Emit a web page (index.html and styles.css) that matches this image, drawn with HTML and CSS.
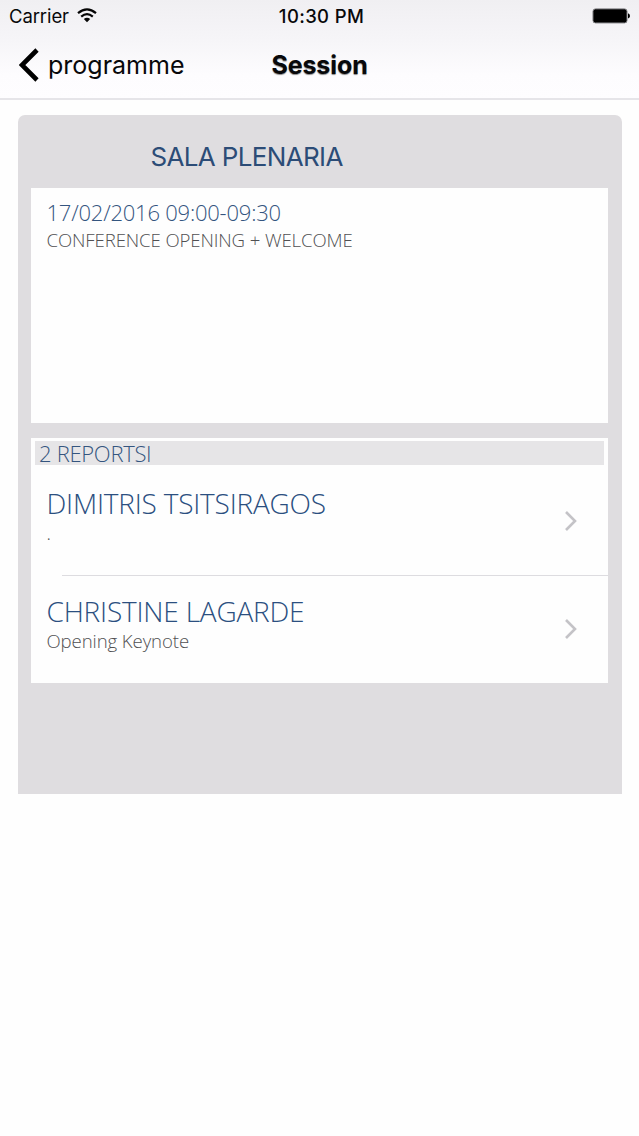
FILE: index.html
```
<!DOCTYPE html>
<html lang="en">
<head>
<meta charset="utf-8">
<title>Session</title>
<link rel="stylesheet" href="styles.css">
</head>
<body>
<header class="header">
  <div class="status">
    <div class="status-left"><span class="carrier">Carrier</span>
      <svg class="wifi" width="20" height="15" viewBox="0 0 20 15" fill="none" stroke="#050505" stroke-width="2.2"><path d="M1 5.2Q10-2.4 19 5.2M4.2 8.6Q10 3.6 15.8 8.6"/><path d="M6.8 11.1Q10 8.3 13.2 11.1L10 14.2Z" fill="#050505" stroke="none"/></svg>
    </div>
    <span class="clock">10:30 PM</span>
    <svg class="battery" width="38" height="16" viewBox="0 0 38 16"><rect x="1" y=".9" width="34" height="14" rx="2.5" fill="#000" stroke="#77777a"/><path d="M36 5.3Q38 6 38 7.9T36 10.5Z" fill="#000"/></svg>
  </div>
  <nav class="nav">
    <a class="back"><svg width="20" height="34" viewBox="0 0 20 34" fill="none" stroke="#000" stroke-width="4.6"><path d="M18 2L3 17L18 32"/></svg><span class="back-label">programme</span></a>
    <h1 class="title">Session</h1>
  </nav>
</header>
<main class="panel">
  <h2 class="room">SALA PLENARIA</h2>
  <section class="card details">
    <p class="time">17/02/2016 09:00-09:30</p>
    <p class="topic">CONFERENCE OPENING + WELCOME</p>
  </section>
  <section class="card reports">
    <h3 class="reports-head">2 REPORTSI</h3>
    <article class="row">
      <div><p class="name">DIMITRIS TSITSIRAGOS</p><p class="sub">.</p></div>
      <svg class="chevron" width="14" height="22" viewBox="0 0 14 22" fill="none" stroke="#c4c3c7" stroke-width="2.6"><path d="M2 2L11 11L2 20"/></svg>
    </article>
    <hr class="rule">
    <article class="row row-last">
      <div><p class="name">CHRISTINE LAGARDE</p><p class="sub">Opening Keynote</p></div>
      <svg class="chevron" width="14" height="22" viewBox="0 0 14 22" fill="none" stroke="#c4c3c7" stroke-width="2.6"><path d="M2 2L11 11L2 20"/></svg>
    </article>
  </section>
</main>
</body>
</html>
```
FILE: styles.css
```
* { box-sizing: border-box; margin: 0; padding: 0; }
body { min-height: 1136px; background: #fefefe; font-family: "Open Sans", sans-serif; font-weight: 300; white-space: nowrap; }
.header { height: 100px; border-bottom: 2px solid #e6e5e9; background: linear-gradient(#f0eff2, #f6f5f8 40px, #fdfcfe 75px, #fefdff); font-family: Inter, sans-serif; color: #08080a; }
.status { height: 32px; display: grid; grid-template-columns: 1fr auto 1fr; align-items: center; padding: 0 9px; }
.status-left { display: flex; align-items: center; gap: 8px; height: 32px; }
.carrier { font-size: 18.5px; font-weight: 400; line-height: 32px; letter-spacing: -.1px; }
.wifi { margin-bottom: 2px; }
.clock { padding-left: 4px; font-size: 18.5px; font-weight: 550; line-height: 32px; letter-spacing: .35px; }
.battery { justify-self: end; }
.nav { height: 66px; display: grid; grid-template-columns: 1fr auto 1fr; align-items: center; padding: 0 19px; }
.back { display: flex; align-items: center; gap: 9px; font-size: 25px; font-weight: 400; }
.back-label { line-height: 66px; }
.title { font-size: 25px; font-weight: 650; line-height: 66px; letter-spacing: -.1px; text-shadow: 0 1px 1px #888; }
.panel { width: 604px; height: 679px; margin: 15px 0 0 18px; padding: 0 14px 0 13px; background: #dfdde0; border-radius: 7px 7px 0 0; }
.room { height: 73px; padding: 10px 0 0 119.5px; font: 400 26px/64px Inter, sans-serif; letter-spacing: -.65px; color: #2c4c77; }
.card { background: #fefefe; }
.details { height: 235px; padding: 11px 15.5px; }
.time { font-size: 22px; line-height: 26px; letter-spacing: -.22px; color: #34557f; }
.topic { font-size: 18.6px; line-height: 29px; letter-spacing: -.11px; color: #505052; }
.reports { height: 245px; margin-top: 15px; padding-top: 3px; }
.reports-head { height: 24px; margin: 0 4px; padding-left: 4px; font-size: 22px; font-weight: 300; line-height: 25px; letter-spacing: -.3px; color: #34557f; background: #e6e5e7; }
.row { height: 110px; display: flex; justify-content: space-between; padding: 19px 30px 0 15.5px; }
.row-last { height: 107px; padding-top: 16px; }
.chevron { margin-top: 26px; }
.name { font-size: 28px; line-height: 38px; letter-spacing: -.2px; color: #2b4f80; }
.sub { font-size: 18.6px; line-height: 21px; letter-spacing: -.1px; color: #505052; }
.rule { height: 1px; margin-left: 31px; border: 0; background: #dddce0; }
```
